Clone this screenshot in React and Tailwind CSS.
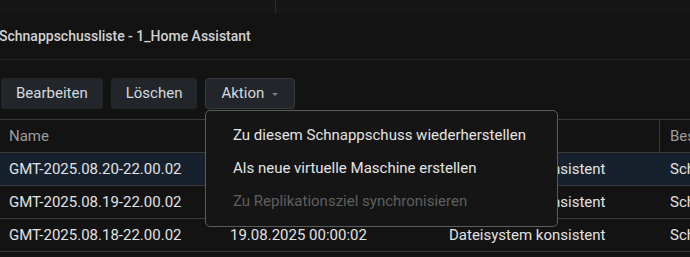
export default function App() {
  const rows = [
    ["GMT-2025.08.20-22.00.02", "21.08.2025 00:00:02", "Dateisystem konsistent", "Schnappschuss", true],
    ["GMT-2025.08.19-22.00.02", "20.08.2025 00:00:02", "Dateisystem konsistent", "Schnappschuss", false],
    ["GMT-2025.08.18-22.00.02", "19.08.2025 00:00:02", "Dateisystem konsistent", "Schnappschuss", false],
  ];
  return (
    <div className="relative w-[690px] h-[257px] overflow-hidden bg-[#131313] text-[#dcdcdc]" style={{ fontFamily: "Roboto, 'Noto Sans', sans-serif" }}>
      <div className="h-[13px] flex bg-[#161616]">
        <div className="w-[276px] border-r border-[#2c2c2c]" />
      </div>
      <div className="h-[47px] flex items-center border-b border-[#262626] text-[14px] font-medium text-[#d2d2d2] -ml-[1px]">
        Schnappschussliste - 1_Home Assistant
      </div>
      <div className="flex gap-[8px] pt-[18px] ml-[1px]">
        <button className="h-[31px] px-[15px] rounded-[4px] bg-[#22262b] text-[15px] text-[#d6d9de]">Bearbeiten</button>
        <button className="h-[31px] px-[15px] rounded-[4px] bg-[#22262b] text-[15px] text-[#d6d9de]">Löschen</button>
        <button className="h-[31px] pl-[15px] pr-[16px] rounded-[4px] bg-[#22262b] border border-[#343a40] text-[15px] text-[#d6d9de] flex items-center gap-[8px]">
          Aktion
          <span className="w-0 h-0 border-l-[3px] border-r-[3px] border-t-[3px] border-l-transparent border-r-transparent border-t-[#7a7e84] mt-[1px]" />
        </button>
      </div>
      <div className="mt-[10px] text-[15px] w-[800px]">
        <div className="flex h-[34px] border-t border-b border-[#3a3a3a] text-[#9c9c9c] items-center">
          <div className="w-[220px] shrink-0 pl-[9px] h-full flex items-center border-r border-[#3a3a3a]">Name</div>
          <div className="w-[220px] shrink-0 pl-[10px] h-full flex items-center border-r border-[#3a3a3a]">Erstellt am</div>
          <div className="w-[220px] shrink-0 pl-[9px] h-full flex items-center border-r border-[#3a3a3a]">Zustand</div>
          <div className="flex-1 pl-[10px] h-full flex items-center whitespace-nowrap">Beschreibung</div>
        </div>
        {rows.map((r, i) => (
          <div key={i} className={`flex h-[33px] border-b border-[#3a3a3a] items-center text-[#e2e2e2] whitespace-nowrap ${r[4] ? "bg-[#16212d]" : ""}`}>
            <div className="w-[220px] shrink-0 pl-[9px]">{r[0]}</div>
            <div className="w-[220px] shrink-0 pl-[10px]">{r[1]}</div>
            <div className="w-[220px] shrink-0 pl-[9px]">{r[2]}</div>
            <div className="flex-1 pl-[10px]">{r[3]}</div>
          </div>
        ))}
      </div>
      <div className="absolute left-[205px] top-[110px] w-[353px] h-[117px] rounded-[5px] border border-[#5c5c5c] bg-[#151515] py-[8px] text-[15px]">
        <div className="h-[33px] flex items-center pl-[27px] text-[#e4e4e4]">Zu diesem Schnappschuss wiederherstellen</div>
        <div className="h-[33px] flex items-center pl-[27px] text-[#e4e4e4]">Als neue virtuelle Maschine erstellen</div>
        <div className="h-[33px] flex items-center pl-[27px] text-[#5f5f5f]">Zu Replikationsziel synchronisieren</div>
      </div>
    </div>
  );
}
